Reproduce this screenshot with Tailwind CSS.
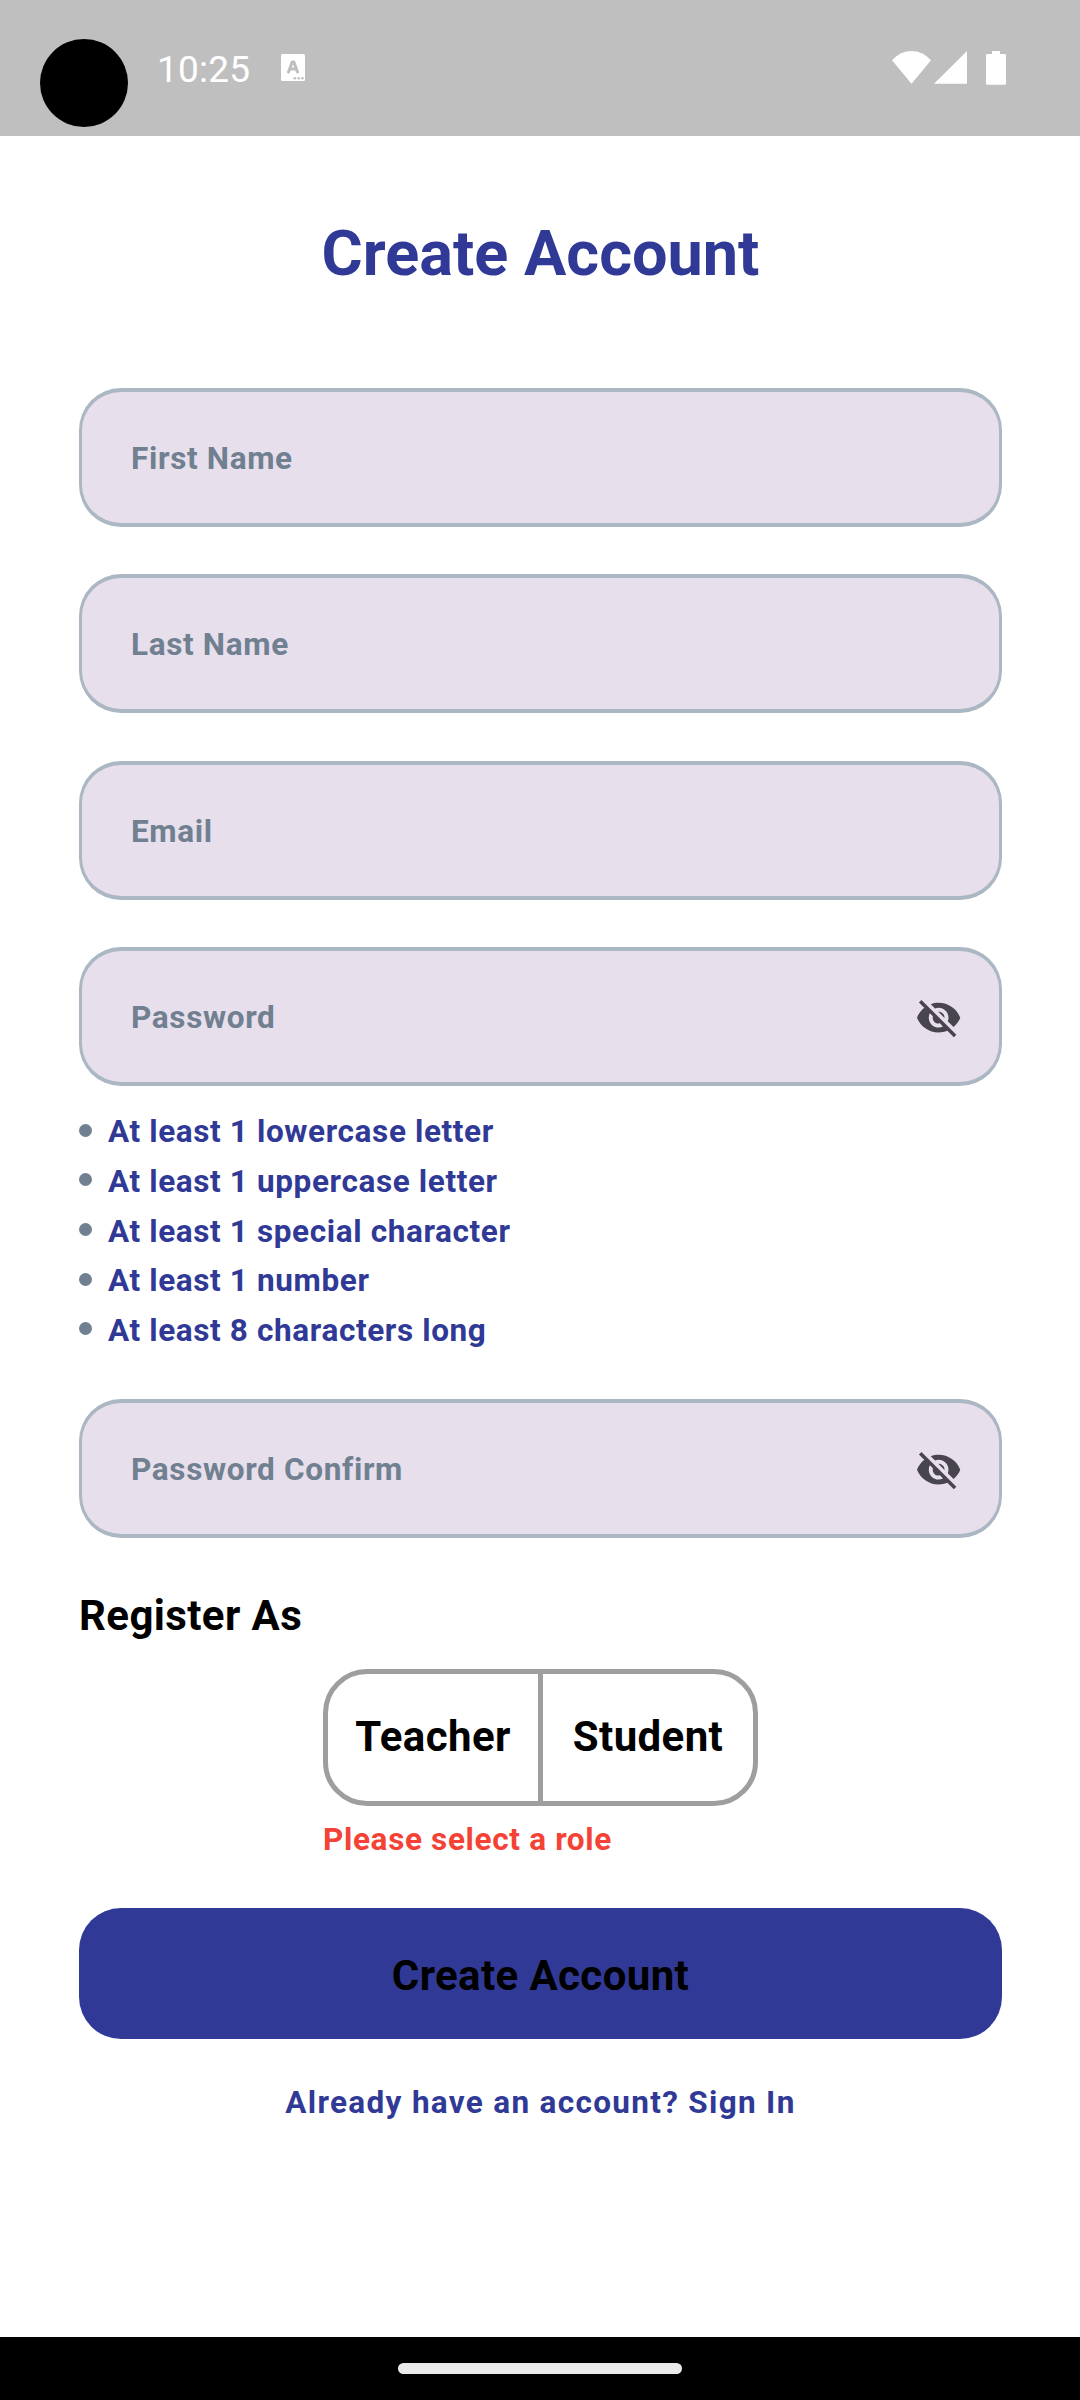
<!DOCTYPE html>
<html lang="en">
<head>
<meta charset="utf-8">
<title>Create Account</title>
<script src="https://cdn.jsdelivr.net/npm/@tailwindcss/browser@4"></script>
</head>
<body class="flex h-[2400px] w-[1080px] flex-col overflow-hidden bg-white font-[Roboto,sans-serif]">
  <header class="flex h-[136px] shrink-0 items-start bg-[#bfbfbf] text-white">
    <div class="mt-[39px] ml-10 size-[88px] rounded-full bg-black"></div>
    <div class="mt-[48px] ml-[29px] w-[95px] text-[37px] leading-[44px] tracking-[0.2px]">10:25</div>
    <svg class="mt-[54px] ml-[29px] h-[27px] w-6" viewBox="0 0 24 27">
      <rect width="24" height="27" rx="1.5" fill="#fff"/>
      <path d="M7.500 18 L11.200 8 H12.800 L16.500 18 M9 15 H15" fill="none" stroke="#bfbfbf" stroke-width="3" stroke-linecap="round" stroke-linejoin="round"/>
      <g fill="#bfbfbf"><circle cx="13.8" cy="24.2" r="1.3"/><circle cx="17.6" cy="24.2" r="1.3"/><circle cx="21.4" cy="24.2" r="1.3"/></g>
    </svg>
    <svg class="mt-[51px] ml-auto h-9 w-[116px]" viewBox="0 0 116 36" fill="#fff">
      <path d="M0 9.2 Q8.500 0 19.500 0 Q30.500 0 39 9.200 L19.500 32.700 Z"/>
      <path d="M42 32.700 L75 0 V32.700 Z"/>
      <path d="M100 0 H108 V3 H112.500 Q114 3 114 4.500 V32.200 Q114 33.700 112.500 33.700 H95.500 Q94 33.700 94 32.200 V4.500 Q94 3 95.500 3 H100 Z"/>
    </svg>
    <div class="w-[72px]"></div>
  </header>

  <main class="flex grow flex-col pt-[81px] pr-[78px] pl-[79px]">
    <h1 class="text-center text-[63px] leading-[74px] font-bold text-[#303a96]">Create Account</h1>

    <div class="mt-[97px] flex flex-col gap-[47.4px] text-[31.5px] font-bold tracking-[0.656px] text-[#708090]">
      <div class="flex h-[139px] items-center rounded-[42px] border-x-[3px] border-y-4 border-[#abb7c2] bg-[#e7dfec] px-[49px] pt-[2px]">First Name</div>
      <div class="flex h-[139px] items-center rounded-[42px] border-x-[3px] border-y-4 border-[#abb7c2] bg-[#e7dfec] px-[49px] pt-[2px]">Last Name</div>
      <div class="flex h-[139px] items-center rounded-[42px] border-x-[3px] border-y-4 border-[#abb7c2] bg-[#e7dfec] px-[49px] pt-[2px]">Email</div>
      <div class="flex h-[139px] items-center justify-between rounded-[42px] border-x-[3px] border-y-4 border-[#abb7c2] bg-[#e7dfec] pt-px pr-[37px] pl-[49px]">Password
        <svg class="size-[47.250px]" viewBox="0 0 24 24" fill="#49454f"><path d="M12 7c2.76 0 5 2.240 5 5 0 .65-.13 1.260-.36 1.830l2.920 2.920c1.510-1.260 2.700-2.890 3.430-4.750-1.730-4.390-6-7.500-11-7.500-1.400 0-2.740.25-3.980.7l2.160 2.160C10.740 7.130 11.350 7 12 7zM2 4.270l2.280 2.280.46.46C3.080 8.300 1.780 10.020 1 12c1.730 4.390 6 7.500 11 7.500 1.550 0 3.030-.3 4.380-.84l.42.42L19.730 22 21 20.730 3.270 3 2 4.270zM7.530 9.800l1.550 1.550c-.05.21-.08.43-.08.65 0 1.660 1.340 3 3 3 .22 0 .44-.03.65-.08l1.550 1.550c-.67.33-1.410.53-2.200.53-2.760 0-5-2.240-5-5 0-.79.2-1.530.53-2.200zm4.310-.78l3.150 3.150.02-.16c0-1.660-1.340-3-3-3l-.17.01z"/></svg>
      </div>
    </div>

    <ul class="mt-[21px] flex flex-col text-[31.5px] leading-[49.700px] font-bold tracking-[0.620px] text-[#303a96]">
      <li class="flex items-center gap-4"><span class="mb-[4px] size-[13px] rounded-full bg-[#708090]"></span>At least 1 lowercase letter</li>
      <li class="flex items-center gap-4"><span class="mb-[4px] size-[13px] rounded-full bg-[#708090]"></span>At least 1 uppercase letter</li>
      <li class="flex items-center gap-4"><span class="mb-[4px] size-[13px] rounded-full bg-[#708090]"></span>At least 1 special character</li>
      <li class="flex items-center gap-4"><span class="mb-[4px] size-[13px] rounded-full bg-[#708090]"></span>At least 1 number</li>
      <li class="flex items-center gap-4"><span class="mb-[4px] size-[13px] rounded-full bg-[#708090]"></span>At least 8 characters long</li>
    </ul>

    <div class="mt-[43px] flex h-[139px] shrink-0 items-center justify-between rounded-[42px] border-x-[3px] border-y-4 border-[#abb7c2] bg-[#e7dfec] pt-[2px] pr-[37px] pl-[49px] text-[31.5px] font-bold tracking-[0.656px] text-[#708090]">Password Confirm
      <svg class="size-[47.250px]" viewBox="0 0 24 24" fill="#49454f"><path d="M12 7c2.76 0 5 2.240 5 5 0 .65-.13 1.260-.36 1.830l2.920 2.920c1.510-1.260 2.700-2.890 3.430-4.750-1.730-4.390-6-7.500-11-7.500-1.400 0-2.740.25-3.980.7l2.160 2.160C10.740 7.130 11.350 7 12 7zM2 4.270l2.280 2.280.46.46C3.080 8.300 1.780 10.020 1 12c1.730 4.390 6 7.500 11 7.500 1.550 0 3.030-.3 4.380-.84l.42.42L19.730 22 21 20.730 3.270 3 2 4.270zM7.530 9.800l1.550 1.550c-.05.21-.08.43-.08.65 0 1.660 1.340 3 3 3 .22 0 .44-.03.65-.08l1.550 1.550c-.67.33-1.410.53-2.200.53-2.760 0-5-2.240-5-5 0-.79.2-1.530.53-2.200zm4.310-.78l3.150 3.150.02-.16c0-1.660-1.340-3-3-3l-.17.01z"/></svg>
    </div>

    <h2 class="mt-[53px] text-[42px] leading-[50px] font-bold tracking-[0.394px] text-black">Register As</h2>

    <div class="mt-[28px] flex w-[435px] flex-col self-center">
      <div class="flex h-[137px] items-stretch rounded-[44px] border-[5px] border-[#9e9e9e] text-[42px] font-bold tracking-[0.394px] text-black">
        <div class="flex flex-1 items-center justify-center border-r-[5px] border-[#9e9e9e] pb-[2px]">Teacher</div>
        <div class="flex w-[210px] items-center justify-center pb-[2px]">Student</div>
      </div>
      <p class="mt-[15px] text-[31.5px] leading-[38px] font-bold tracking-[0.656px] text-[#f44336]">Please select a role</p>
    </div>

    <div class="mt-[49px] flex h-[131px] items-center justify-center rounded-[42px] bg-[#303a96] pt-[4px] text-[42px] font-bold tracking-[0.394px] text-black">Create Account</div>
    <p class="mt-[45px] text-center text-[31.5px] leading-[38px] font-bold tracking-[1.313px] text-[#303a96]">Already have an account? Sign In</p>
  </main>

  <footer class="flex h-[63px] shrink-0 items-start justify-center bg-black pt-[26px]">
    <div class="h-[11px] w-[284px] rounded-full bg-[#ebebeb]"></div>
  </footer>
</body>
</html>
